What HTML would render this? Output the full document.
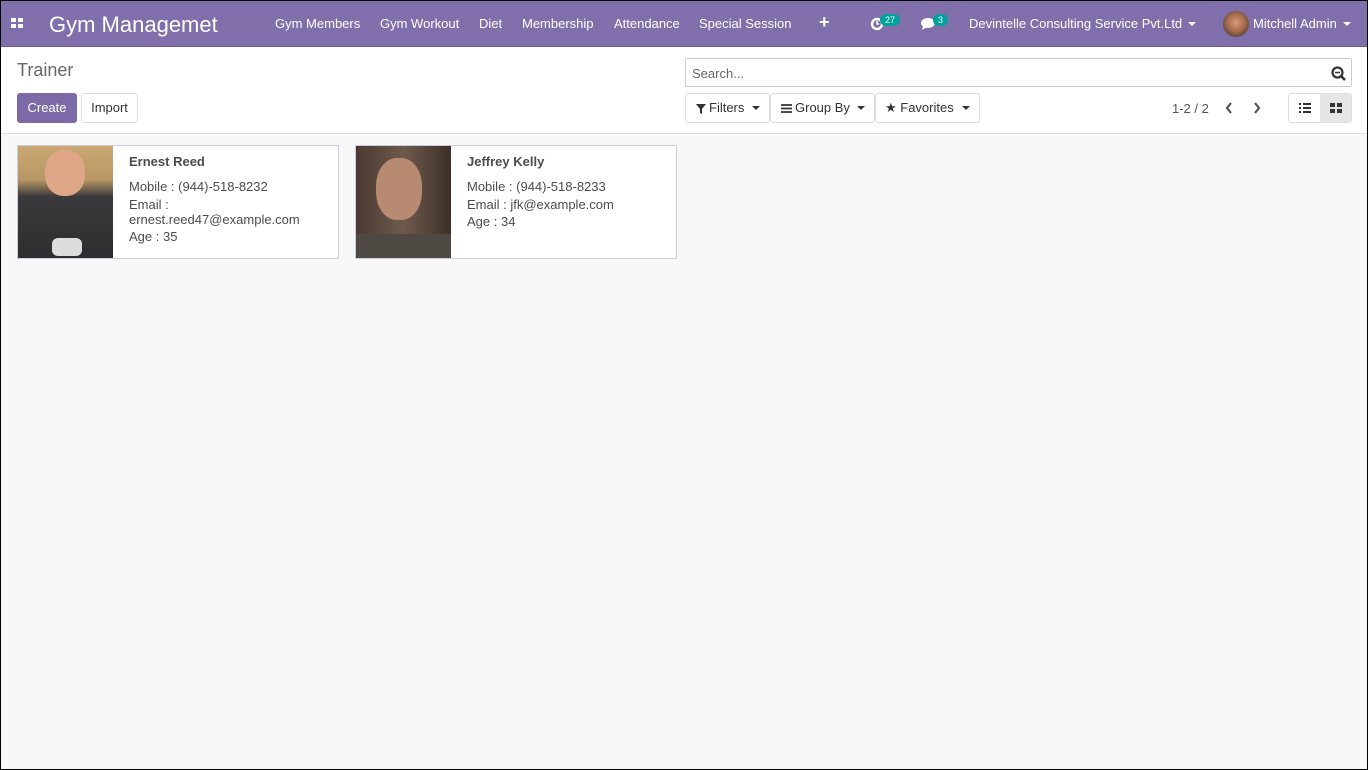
<!DOCTYPE html>
<html><head><style>
*{box-sizing:border-box;margin:0;padding:0}
body{width:1368px;height:770px;overflow:hidden;font-family:"Liberation Sans",sans-serif;font-size:13px;color:#4c4c4c;background:#f8f8f8;border:1px solid #000;position:relative}
.frame{position:absolute;left:-1px;top:-1px;width:1368px;height:770px;border:1px solid #000;z-index:10}
.nav{position:absolute;left:-1px;top:-1px;width:1368px;height:47px;background:#806fab;border-bottom:1px solid #6a5a95;color:#fff}
.nav span{position:absolute;top:16px;font-size:13px}
.ctrl{position:absolute;left:-1px;top:46px;width:1368px;height:87px;background:#fff;border-bottom:1px solid #ddd}
.btn{position:absolute;height:30px;border:1px solid #ddd;border-radius:3px;background:#fff;font-size:13px;line-height:28px;text-align:center;color:#333}
.card{position:absolute;top:144px;width:322px;height:114px;background:#fff;border:1px solid #ccd;}
.card .img{position:absolute;left:0;top:0;width:95px;height:112px}
.card .l{position:absolute;left:111px;font-size:13px;color:#4c4c4c;white-space:nowrap}
.badge{position:absolute;background:#00a09d;color:#fff;font-size:9px;border-radius:8px;padding:1px 5px;top:14px}
</style></head><body>
<div class="frame"></div>
<div class="nav">
<svg style="position:absolute;left:11px;top:18px" width="12" height="11"><rect x="0" y="0" width="5" height="4" fill="#fff"/><rect x="7" y="0" width="5" height="4" fill="#fff"/><rect x="0" y="6" width="5" height="4" fill="#fff"/><rect x="7" y="6" width="5" height="4" fill="#fff"/></svg>
<span style="left:49px;top:12px;font-size:22px">Gym Managemet</span>
<span style="left:275px">Gym Members</span>
<span style="left:380px">Gym Workout</span>
<span style="left:479px">Diet</span>
<span style="left:522px">Membership</span>
<span style="left:614px">Attendance</span>
<span style="left:699px">Special Session</span>
<span style="left:819px;top:12px;font-size:18px;font-weight:bold">+</span>
<svg style="position:absolute;left:870px;top:17px" width="14" height="14"><circle cx="7" cy="7" r="5" stroke="#fff" stroke-width="2.4" fill="none"/><path d="M7 4v3h2" stroke="#fff" stroke-width="1.6" fill="none"/></svg>
<div class="badge" style="left:880px">27</div>
<svg style="position:absolute;left:920px;top:17px" width="16" height="14"><ellipse cx="8" cy="6" rx="7" ry="5" fill="#fff"/><path d="M3 9 L2 13 L7 10z" fill="#fff"/></svg>
<div class="badge" style="left:933px">3</div>
<span style="left:969px">Devintelle Consulting Service Pvt.Ltd</span>
<svg style="position:absolute;left:1188px;top:22px" width="8" height="5"><path d="M0 0h8L4 4z" fill="#fff"/></svg>
<div style="position:absolute;left:1223px;top:11px;width:26px;height:26px;border-radius:50%;background:radial-gradient(circle at 50% 45%,#d49a78 0,#a86b4d 45%,#5a4a3c 75%)"></div>
<span style="left:1253px">Mitchell Admin</span>
<svg style="position:absolute;left:1343px;top:22px" width="8" height="5"><path d="M0 0h8L4 4z" fill="#fff"/></svg>
</div>
<div class="ctrl">
<div style="position:absolute;left:17px;top:13px;font-size:18px;color:#666">Trainer</div>
<div class="btn" style="left:17px;top:46px;width:60px;background:#7c6ba8;border-color:#7c6ba8;color:#fff">Create</div>
<div class="btn" style="left:81px;top:46px;width:57px">Import</div>
<div style="position:absolute;left:685px;top:11px;width:667px;height:29px;border:1px solid #ccc;border-radius:2px"><span style="position:absolute;left:6px;top:7px;color:#666">Search...</span>
<svg style="position:absolute;right:5px;top:7px" width="15" height="15"><circle cx="6.5" cy="6.5" r="5" stroke="#333" stroke-width="2.2" fill="none"/><path d="M10 10l4 4" stroke="#333" stroke-width="2.6"/><path d="M4 6.5h5" stroke="#333" stroke-width="1.5"/></svg></div>
<div class="btn" style="left:685px;top:46px;width:85px">
<svg style="position:absolute;left:10px;top:10px" width="10" height="10"><path d="M0 0h10L6 5v5L4 9V5z" fill="#333"/></svg><span style="position:absolute;left:23px">Filters</span><svg style="position:absolute;left:66px;top:12px" width="8" height="5"><path d="M0 0h8L4 4z" fill="#333"/></svg></div>
<div class="btn" style="left:770px;top:46px;width:105px">
<svg style="position:absolute;left:10px;top:10px" width="11" height="9"><path d="M0 1h11M0 4.5h11M0 8h11" stroke="#333" stroke-width="1.8"/></svg><span style="position:absolute;left:24px">Group By</span><svg style="position:absolute;left:86px;top:12px" width="8" height="5"><path d="M0 0h8L4 4z" fill="#333"/></svg></div>
<div class="btn" style="left:875px;top:46px;width:105px"><span style="position:absolute;left:9px">★ Favorites</span><svg style="position:absolute;left:86px;top:12px" width="8" height="5"><path d="M0 0h8L4 4z" fill="#333"/></svg></div>
<div style="position:absolute;left:1172px;top:54px;color:#555">1-2 / 2</div>
<svg style="position:absolute;left:1225px;top:55px" width="8" height="12"><path d="M6 1L2 6l4 5" stroke="#555" stroke-width="2.2" fill="none"/></svg>
<svg style="position:absolute;left:1253px;top:55px" width="8" height="12"><path d="M2 1l4 5-4 5" stroke="#555" stroke-width="2.2" fill="none"/></svg>
<div class="btn" style="left:1288px;top:46px;width:64px;overflow:hidden"><div style="position:absolute;right:0;top:0;width:31px;height:28px;background:#e6e6e6"></div>
<svg style="position:absolute;left:10px;top:9px" width="12" height="10"><path d="M0 1h2M4 1h8M0 5h2M4 5h8M0 9h2M4 9h8" stroke="#333" stroke-width="2"/></svg>
<svg style="position:absolute;left:41px;top:9px" width="12" height="10"><rect width="5" height="4" fill="#333"/><rect x="7" width="5" height="4" fill="#333"/><rect y="6" width="5" height="4" fill="#333"/><rect x="7" y="6" width="5" height="4" fill="#333"/></svg></div>
</div>
<div class="card" style="left:16px">
<div class="img" style="background:linear-gradient(180deg,#c9a872 0,#b89766 30%,#3a3a3c 45%,#2e2e30 100%)"><div style="position:absolute;left:27px;top:4px;width:40px;height:46px;border-radius:45%;background:#e0a688"></div><div style="position:absolute;left:34px;top:92px;width:30px;height:18px;background:#ddd;border-radius:6px"></div></div>
<div class="l" style="top:8px"><b>Ernest Reed</b></div>
<div class="l" style="top:33px">Mobile : (944)-518-8232</div>
<div class="l" style="top:51px">Email :</div>
<div class="l" style="top:66px">ernest.reed47@example.com</div>
<div class="l" style="top:83px">Age : 35</div>
</div>
<div class="card" style="left:354px">
<div class="img" style="background:linear-gradient(90deg,#4a3a32,#6e5a4c 50%,#3d3029)"><div style="position:absolute;left:20px;top:12px;width:46px;height:62px;border-radius:45%;background:#b88a72"></div><div style="position:absolute;left:0;top:88px;width:95px;height:24px;background:#4e4942"></div></div>
<div class="l" style="top:8px"><b>Jeffrey Kelly</b></div>
<div class="l" style="top:33px">Mobile : (944)-518-8233</div>
<div class="l" style="top:51px">Email : jfk@example.com</div>
<div class="l" style="top:68px">Age : 34</div>
</div>
</body></html>
